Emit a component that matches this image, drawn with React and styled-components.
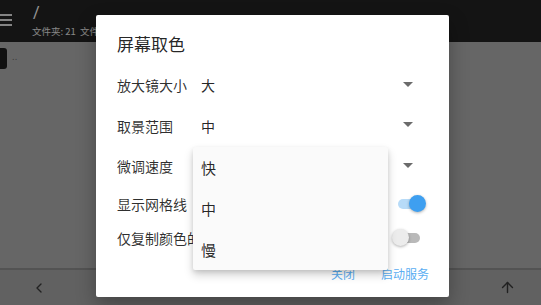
import React from "react";
import styled, { createGlobalStyle } from "styled-components";
import { ChevronLeft, ArrowUp } from "lucide-react";

const Global = createGlobalStyle`
  html, body { margin: 0; padding: 0; }
  body {
    font-family: "Noto Sans CJK SC", "Noto Sans", Roboto, sans-serif;
    overflow: hidden;
  }
`;

const Page = styled.div`
  position: relative;
  width: 100vw;
  height: 100vh;
  display: flex;
  flex-direction: column;
  background: #aaaaaa;
`;

const TopBar = styled.header`
  height: 42px;
  flex: none;
  background: #222222;
  display: flex;
  align-items: flex-start;
  gap: 20px;
  padding: 0;
`;

const Hamburger = styled.div`
  width: 12px;
  margin-top: 14px;
  display: flex;
  flex-direction: column;
  gap: 3px;
  span {
    display: block;
    height: 2px;
    background: #dddddd;
  }
`;

const TitleBlock = styled.div`
  display: flex;
  flex-direction: column;
  padding-top: 4px;
`;

const Path = styled.div`
  font-family: Roboto, "Noto Sans", sans-serif;
  font-size: 16px;
  line-height: 18px;
  color: #ffffff;
  padding-left: 1px;
`;

const Sub = styled.div`
  font-size: 9.5px;
  line-height: 14px;
  margin-top: 2px;
  color: #e0e0e0;
  white-space: nowrap;
`;

const Content = styled.main`
  flex: 1;
  background: #aaaaaa;
  padding-top: 5px;
`;

const FileRow = styled.div`
  display: flex;
  align-items: center;
  gap: 5px;
  height: 22px;
`;

const FolderIcon = styled.div`
  width: 7px;
  height: 21px;
  background: #1c1c1c;
  border-radius: 0 3px 3px 0;
`;

const FileName = styled.span`
  font-family: Roboto, sans-serif;
  font-size: 10px;
  color: #666;
  line-height: 10px;
  margin-top: -2px;
`;

const BottomBar = styled.footer`
  height: 35px;
  flex: none;
  background: #a2a2a2;
  border-top: 2px solid #8a8a8a;
  display: flex;
  align-items: center;
  justify-content: space-between;
  padding: 0 25px 0 31px;
  color: #383838;
`;

const Overlay = styled.div`
  position: absolute;
  inset: 0;
  background: rgba(0, 0, 0, 0.4);
  display: flex;
  align-items: flex-start;
  padding: 15px 0 0 96px;
`;

const Dialog = styled.div`
  position: relative;
  width: 353px;
  background: #ffffff;
  border-radius: 2px;
  box-shadow: 0 8px 20px rgba(0, 0, 0, 0.3);
  display: flex;
  flex-direction: column;
  padding: 17px 22px 12px 21px;
  box-sizing: border-box;
  color: rgba(0, 0, 0, 0.85);
`;

const DialogTitle = styled.h2`
  margin: 0 0 9px;
  font-size: 17px;
  line-height: 24px;
  font-weight: 400;
  color: rgba(0, 0, 0, 0.87);
`;

const SelectRow = styled.div`
  height: 40.5px;
  display: flex;
  align-items: center;
  font-size: 14px;
`;

const Label = styled.span`
  width: 84px;
  flex: none;
  white-space: nowrap;
  overflow: hidden;
  color: rgba(0, 0, 0, 0.82);
`;

const SelectField = styled.div`
  flex: 1;
  display: flex;
  align-items: center;
  justify-content: space-between;
  padding-right: 14px;
`;

const Caret = styled.span`
  width: 0;
  height: 0;
  margin-top: -2px;
  border-left: 5px solid transparent;
  border-right: 5px solid transparent;
  border-top: 5px solid #6b6b6b;
`;

const SwitchRow = styled.div`
  height: 34px;
  display: flex;
  align-items: center;
  justify-content: space-between;
  font-size: 14px;
  color: rgba(0, 0, 0, 0.82);
`;

const SwitchBox = styled.div`
  position: relative;
  width: 36px;
  height: 18px;
  display: flex;
  align-items: center;
`;

const Track = styled.div`
  margin-left: 7px;
  width: 22px;
  height: 10px;
  border-radius: 5px;
  background: ${(p) => (p.$on ? "#b7dbf8" : "#b9b9b9")};
`;

const Thumb = styled.div`
  position: absolute;
  top: 0.5px;
  left: ${(p) => (p.$on ? "18px" : "0.5px")};
  width: 17px;
  height: 17px;
  border-radius: 50%;
  background: ${(p) => (p.$on ? "#3e9ff0" : "#ececec")};
  box-shadow: 0 1px 3px rgba(0, 0, 0, 0.3);
`;

const Actions = styled.div`
  margin-top: 8px;
  margin-right: -2px;
  display: flex;
  justify-content: flex-end;
  gap: 26px;
`;

const TextButton = styled.span`
  font-size: 12px;
  line-height: 22px;
  color: #5aaef2;
`;

const Menu = styled.div`
  position: absolute;
  left: 97px;
  top: 132px;
  width: 195px;
  background: #fafafa;
  border-radius: 2px;
  box-shadow: 0 5px 10px rgba(0, 0, 0, 0.18), 0 2px 4px rgba(0, 0, 0, 0.1);
  display: flex;
  flex-direction: column;
`;

const MenuItem = styled.div`
  height: 41px;
  display: flex;
  align-items: center;
  padding-left: 8px;
  font-size: 15px;
  color: rgba(0, 0, 0, 0.85);
`;

function Switch({ on }) {
  return (
    <SwitchBox>
      <Track $on={on} />
      <Thumb $on={on} />
    </SwitchBox>
  );
}

export default function App() {
  return (
    <>
      <Global />
      <Page>
        <TopBar>
          <Hamburger>
            <span />
            <span />
            <span />
          </Hamburger>
          <TitleBlock>
            <Path>/</Path>
            <Sub>文件夹: 21&nbsp;&nbsp;文件: 3</Sub>
          </TitleBlock>
        </TopBar>
        <Content>
          <FileRow>
            <FolderIcon />
            <FileName>..</FileName>
          </FileRow>
        </Content>
        <BottomBar>
          <ChevronLeft size={16} strokeWidth={2} />
          <ArrowUp size={17} strokeWidth={2} />
        </BottomBar>
        <Overlay>
          <Dialog>
            <DialogTitle>屏幕取色</DialogTitle>
            <SelectRow>
              <Label>放大镜大小</Label>
              <SelectField>
                <span>大</span>
                <Caret />
              </SelectField>
            </SelectRow>
            <SelectRow>
              <Label>取景范围</Label>
              <SelectField>
                <span>中</span>
                <Caret />
              </SelectField>
            </SelectRow>
            <SelectRow>
              <Label>微调速度</Label>
              <SelectField>
                <span>快</span>
                <Caret />
              </SelectField>
            </SelectRow>
            <SwitchRow>
              <span>显示网格线</span>
              <Switch on />
            </SwitchRow>
            <SwitchRow>
              <span>仅复制颜色的值</span>
              <Switch />
            </SwitchRow>
            <Actions>
              <TextButton>关闭</TextButton>
              <TextButton>启动服务</TextButton>
            </Actions>
            <Menu>
              <MenuItem>快</MenuItem>
              <MenuItem>中</MenuItem>
              <MenuItem>慢</MenuItem>
            </Menu>
          </Dialog>
        </Overlay>
      </Page>
    </>
  );
}
